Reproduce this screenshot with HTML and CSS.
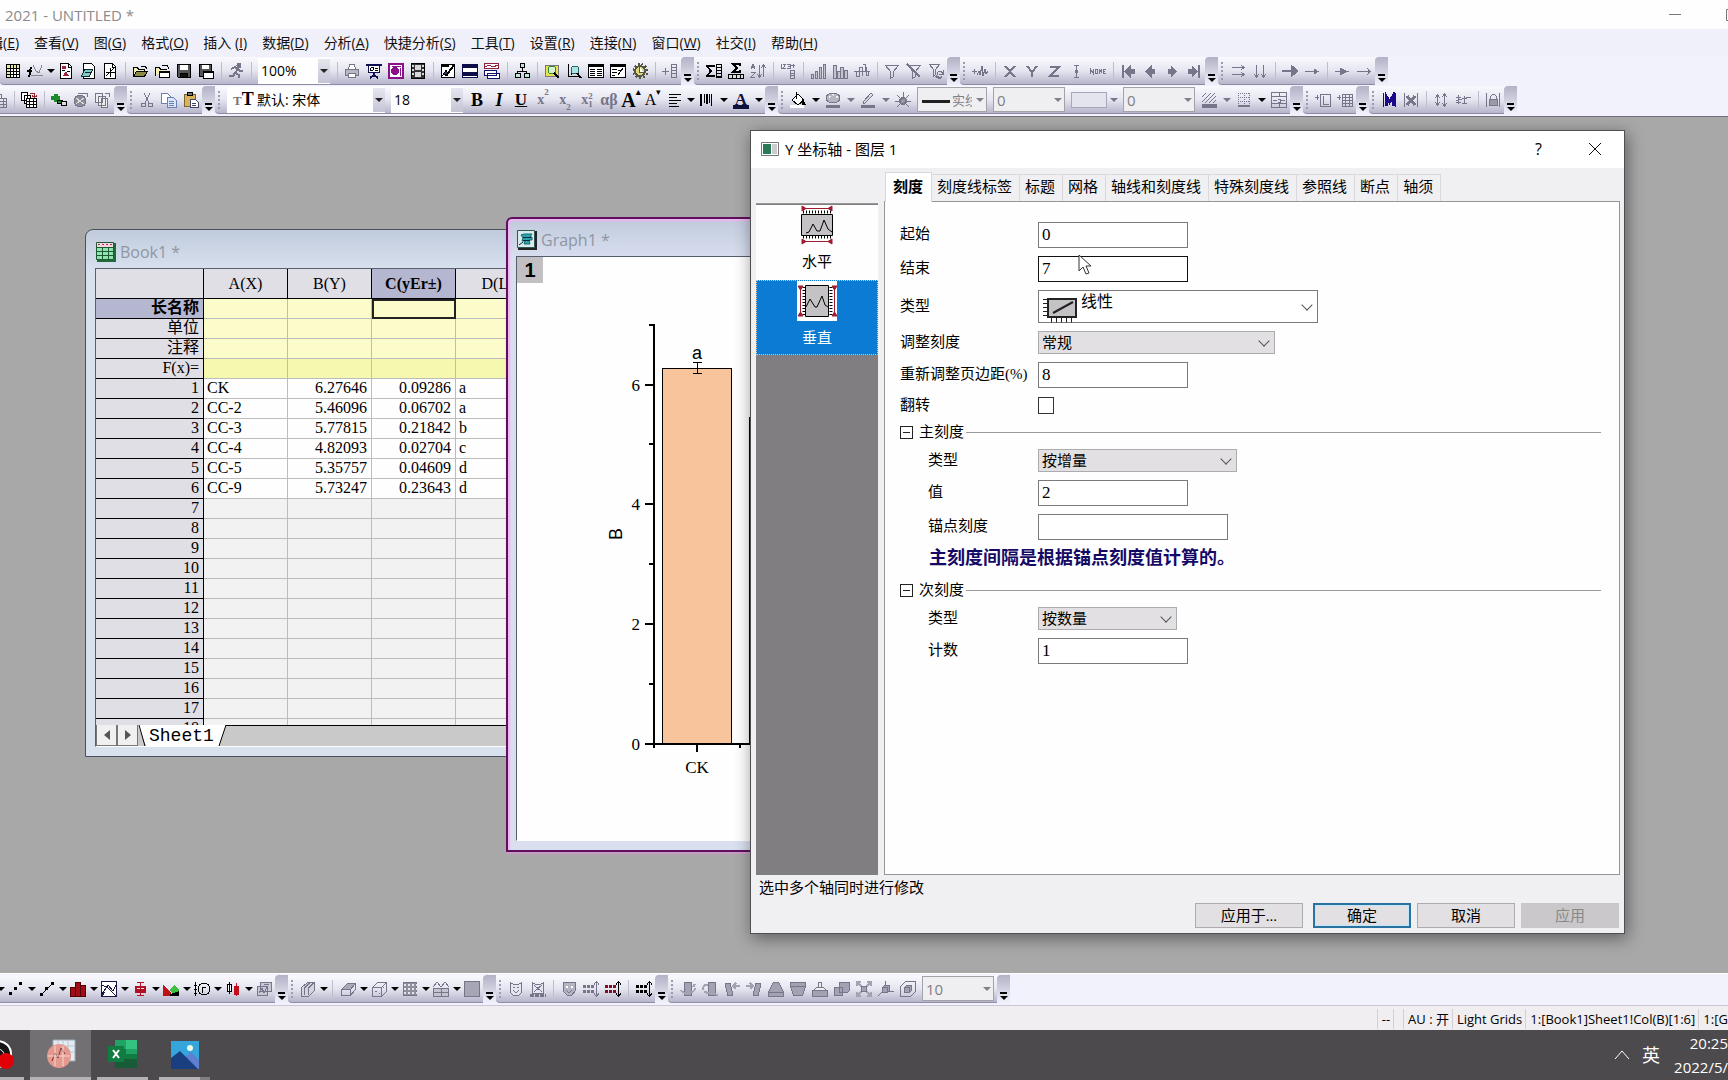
FILE: index.html
```html
<!DOCTYPE html>
<html lang="zh-CN">
<head>
<meta charset="utf-8">
<title>2021 - UNTITLED *</title>
<link rel="stylesheet" href="styles.css">
</head>
<body>
<svg class="sprite" aria-hidden="true">
  <symbol id="sheet" viewBox="0 0 16 16"><rect x="1.500" y="1.500" width="13" height="13" fill="#fff"/><path fill="#e9e6a0" stroke="none" d="M2 2h12v3H2zM2 5h3v9H2z"/><path d="M1 5.500h14M1 8.500h14M1 11.500h14M5.500 2v13M8.500 2v13M11.500 2v13"/></symbol>
  <symbol id="fx" viewBox="0 0 16 16"><path stroke="#888" d="M4 12.500h12M6 2l3 6 3 2 3-8"/><path stroke-width="2" d="M5 5c-3-1-1 9-4 8M0 8h5"/></symbol>
  <symbol id="page-bars" viewBox="0 0 16 16"><path fill="#fff" d="M2.500.500h8l3 3v12h-11z"/><path fill="#a12040" stroke="none" d="M4 3h4v3H4zM5 13l3-5 3 5z"/><path d="M10.500 1v3h3M9 8.500h3M4 7.500h3"/></symbol>
  <symbol id="page-draw" viewBox="0 0 16 16"><path fill="#fff" d="M3.500.500h8l3 3v12h-11z"/><path fill="#7ecdc0" stroke="#123" d="M1.500 13.500l3-7h8l-3 7zM5 9.500h6"/></symbol>
  <symbol id="page-axis" viewBox="0 0 16 16"><path fill="#fff" d="M2.500.500h8l3 3v12h-11z"/><path d="M10.500 1v3h3M4 13l8-8M8.500 5v9M4 9.500h9"/></symbol>
  <symbol id="open" viewBox="0 0 16 16"><path fill="#f4f1b0" d="M1.500 13.500v-9h4l1 2h6v2"/><path fill="#8b8a45" d="M1.500 13.500l3-5h11l-3 5z"/><path d="M9 3.500h4l2 2"/></symbol>
  <symbol id="open-grid" viewBox="0 0 16 16"><path fill="#f4f1b0" d="M1.500 12.500v-8h4l1 2h6"/><path fill="#fff" d="M5.500 8.500h10v6h-10z"/><path stroke-width="2" d="M5 9h11"/><path d="M8 2.500h5l2 3"/></symbol>
  <symbol id="save" viewBox="0 0 16 16"><path fill="#555" d="M1.500 1.500h13v13h-12l-1-1z"/><path fill="#fff" stroke="none" d="M4 2h8v5H4z"/><path fill="#111" d="M4.500 10.500h7v4h-7z"/></symbol>
  <symbol id="save-grid" viewBox="0 0 16 16"><path fill="#555" d="M1.500 1.500h12v12h-12z"/><path fill="#fff" stroke="none" d="M4 2h7v4H4z"/><path fill="#fff" d="M5.500 8.500h10v7h-10z"/><path stroke-width="2" d="M5 9h11"/></symbol>
  <symbol id="runner" viewBox="0 0 16 16"><circle cx="11" cy="2.500" r="2" fill="currentColor"/><path stroke-width="2" d="M3 6l4-2 3 2-3 4 4 2v3M7 10l-2 3H1M10 6l2 2h3"/></symbol>
  <symbol id="print" viewBox="0 0 16 16"><path fill="#b8b8c4" d="M1.500 6.500h13v6h-13z"/><path fill="#fff" d="M4.500 6.500l1-5h5l1 5zM4.500 10.500h7v4h-7z"/></symbol>
  <symbol id="present" viewBox="0 0 16 16"><path stroke="#101050" fill="#fff" d="M2.500 2.500h11v7h-11z"/><path stroke="#101050" stroke-width="2" d="M0 2h16M8 10v3M4 15l4-3 4 3"/><circle cx="6" cy="6" r="1.500"/><path d="M9 5.500h3M9 7.500h3"/></symbol>
  <symbol id="palette-box" viewBox="0 0 16 16"><path fill="#fff" stroke="#8a0f8a" stroke-width="2" d="M1 1h14v14H1z"/><circle cx="7" cy="8" r="3.500" fill="#8a0f8a" stroke="#8a0f8a"/><path stroke="#8a0f8a" d="M4 3.500h9M12.500 5v8"/></symbol>
  <symbol id="film" viewBox="0 0 16 16"><path fill="#333" d="M1.500.500h13v15h-13z"/><path fill="#d8d8d8" stroke="none" d="M5 2h6v5H5zM5 9h6v5H5zM2 2h2v2H2zM2 6h2v2H2zM2 10h2v2H2zM12 2h2v2h-2zM12 6h2v2h-2zM12 10h2v2h-2z"/></symbol>
  <symbol id="notes" viewBox="0 0 16 16"><path fill="#fff" d="M1.500 1.500h13v13h-13z"/><path stroke-width="2" d="M1 3h8M6 13l8-11"/><path fill="#335" d="M3 12l3-5 2 4z"/></symbol>
  <symbol id="bands" viewBox="0 0 16 16"><path fill="#fff" stroke="#0c0c48" d="M.500 1.500h15v13H.500z"/><path stroke="#0c0c48" stroke-width="4" d="M0 3h16M0 11h16"/></symbol>
  <symbol id="stack" viewBox="0 0 16 16"><path fill="#fff" stroke="#902040" d="M.500.500h14v5H.500z"/><path stroke="#902040" d="M1 4l4-2 4 2 5-2"/><path fill="#fff" stroke="#101070" d="M.500 7.500h12v5H.500zM3.500 10.500h12v5h-12z"/></symbol>
  <symbol id="tree" viewBox="0 0 16 16"><path d="M8 5v4M3.500 11v-2.500h9V11"/><path fill="#bfe8d8" d="M6 .500h4v4H6zM1 10.500h5v4H1zM10 10.500h5v4h-5z"/></symbol>
  <symbol id="find-graph" viewBox="0 0 16 16"><path fill="#e9e24c" stroke="#777" d="M1.500 2.500h13v11h-13z"/><circle cx="8" cy="7" r="4" fill="#d7f0d0" stroke="#383"/><path stroke-width="2" d="M10 10l5 5"/></symbol>
  <symbol id="find-axis" viewBox="0 0 16 16"><path d="M2.500 1v12H15M5 12V4l3 4"/><circle cx="9" cy="7" r="4" fill="#a8e4e4" stroke="#266"/><path stroke-width="2" d="M11 10l4 5"/></symbol>
  <symbol id="list" viewBox="0 0 16 16"><path fill="#fff" d="M.500 1.500h15v13H.500z"/><path stroke-width="3" d="M0 2.500h16"/><path d="M2 6.500h5M9 6.500h5M2 8.500h5M9 8.500h5M2 10.500h5M9 10.500h5M2 12.500h5M9 12.500h5"/></symbol>
  <symbol id="list-edit" viewBox="0 0 16 16"><path fill="#fff" d="M.500 1.500h15v13H.500z"/><path stroke-width="3" d="M0 2.500h16"/><path d="M2 6.500h5M2 9.500h5M2 12.500h3M8 12l5-7M8 7.500h3"/></symbol>
  <symbol id="gear" viewBox="0 0 16 16"><circle cx="8" cy="8" r="5" fill="#dcd878" stroke="#554" stroke-width="2"/><path stroke="#554" stroke-width="2" stroke-dasharray="2 2" d="M8 1a7 7 0 1 0 1 0"/><path fill="#fff" stroke="#554" d="M7.500 3v6h4"/></symbol>
  <symbol id="add-col" viewBox="0 0 16 16"><path d="M0 8.500h7M3.500 5v7M9.500 1.500h5v13h-5zM9 4.500h6M9 7.500h6M9 10.500h6"/></symbol>
  <symbol id="sum-col" viewBox="0 0 16 16"><path stroke-width="2" d="M8 4V3H1l4 5-4 5h7v-1"/><path d="M10.500 1.500h5v13h-5zM10 4.500h6M10 7.500h6M10 10.500h6M10 13.500h6"/></symbol>
  <symbol id="sum-row" viewBox="0 0 16 16"><path stroke-width="2" d="M12 3V1H5l4 4-4 4h7V7"/><path fill="#ddd" d="M.500 11.500h15v4H.500zM4.500 11v4M8.500 11v4M12.500 11v4"/></symbol>
  <symbol id="sort" viewBox="0 0 16 16"><path d="M1 6l2-5 2 5M2 4.500h3M1 9.500h4l-4 5h4M9.500 2v12M7 11l2.500 3L12 11M13.500 14V2M11 5l2.500-3L16 5"/></symbol>
  <symbol id="num-col" viewBox="0 0 16 16"><path d="M1.500 1v5M3 1.500h2.500L3 5.500h3M7 1.500h3v4H7M8 3.500h2M11 2.500h4M13 1v4M10.500 7.500h4v8h-4zM10 10.500h5M10 12.500h5"/></symbol>
  <symbol id="bars-up" viewBox="0 0 16 16"><path fill="#c4c4d0" d="M1.500 11.500h2v4h-2zM5.500 8.500h2v7h-2zM9.500 4.500h2v11h-2zM13.500 1.500h2v14h-2z"/></symbol>
  <symbol id="bars-mix" viewBox="0 0 16 16"><path fill="#c4c4d0" d="M1.500 2.500h3v13h-3zM5.500 8.500h3v7h-3zM8.500 4.500h3v11h-3zM12.500 7.500h3v8h-3z"/></symbol>
  <symbol id="bars-mid" viewBox="0 0 16 16"><path d="M0 8.500h16M2.500 8v5h3V4h3v9M8.500 1.500h3v7M12.500 4v8h2V8"/></symbol>
  <symbol id="funnel" viewBox="0 0 16 16"><path d="M1.500 2.500h13l-5 6v5l-3 2v-7zM2 3l5 6"/></symbol>
  <symbol id="funnel-off" viewBox="0 0 16 16"><path d="M2.500 2.500h12l-5 6v5l-3 2v-7z"/><path stroke-width="2" d="M1 1l13 13"/></symbol>
  <symbol id="funnel-re" viewBox="0 0 16 16"><path d="M1.500 1.500h10l-4 5v5l-2 2v-7zM9 12c0-5 5-4 6-1M15 7v4h-4"/><path stroke-width="2" d="M14 14c-3 2-5 0-6-1"/></symbol>
  <symbol id="plus-wave" viewBox="0 0 16 16"><path d="M0 8.500h5M2.500 6v5M5 12l2-4 1 4 2-9 1 10 2-7 1 5 2-3"/></symbol>
  <symbol id="lx" viewBox="0 0 16 16"><path stroke-width="2" d="M3 3l10 11M13 3L3 14"/></symbol>
  <symbol id="ly" viewBox="0 0 16 16"><path stroke-width="2" d="M3 3l5 6 5-6M8 8v6"/></symbol>
  <symbol id="lz" viewBox="0 0 16 16"><path stroke-width="2" d="M4 4h9L4 13h9"/></symbol>
  <symbol id="errbar" viewBox="0 0 16 16"><path d="M8.500 3v11M6 2.500h5M6 14.500h5"/><path fill="currentColor" d="M7.500 7.500h2v2h-2z"/></symbol>
  <symbol id="none" viewBox="0 0 16 16"><path d="M.500 11V6l2.500 4V6M5.500 6.500h2v4h-2zM9.500 11V6l2 4V6M15.500 6.500h-2v4h2M13 8.500h2"/></symbol>
  <symbol id="first" viewBox="0 0 16 16"><path stroke-width="2" d="M3 2v13"/><path fill="currentColor" d="M5 8.500l5-5v3h4v4h-4v3z"/></symbol>
  <symbol id="prev" viewBox="0 0 16 16"><path fill="currentColor" d="M4 8.500l5-5v3h3v4H9v3z"/></symbol>
  <symbol id="next" viewBox="0 0 16 16"><path fill="currentColor" d="M12 8.500l-5-5v3H4v4h3v3z"/></symbol>
  <symbol id="last" viewBox="0 0 16 16"><path stroke-width="2" d="M13 2v13"/><path fill="currentColor" d="M11 8.500l-5-5v3H2v4h4v3z"/></symbol>
  <symbol id="rights" viewBox="0 0 16 16"><path d="M2 4.500h12M2 11.500h12M11 2l3 2.500L11 7M11 9l3 2.500-3 2.500"/></symbol>
  <symbol id="downs" viewBox="0 0 16 16"><path d="M4.500 2v12M11.500 2v12M2 11l2.500 3L7 11M9 11l2.500 3 2.500-3"/></symbol>
  <symbol id="arrow-big" viewBox="0 0 16 16"><path stroke-width="2" d="M0 8h10"/><path fill="currentColor" d="M9 2l7 6-7 6z"/></symbol>
  <symbol id="arrow" viewBox="0 0 16 16"><path d="M1 8.500h10"/><path fill="currentColor" d="M10 6l4 2.500-4 2.500z"/></symbol>
  <symbol id="arrow-mid" viewBox="0 0 16 16"><path d="M1 8.500h14"/><path fill="currentColor" d="M6 5l7 3.500L6 12z"/></symbol>
  <symbol id="arrow-thin" viewBox="0 0 16 16"><path d="M1 8.500h13M11 5l3 3.500-3 3.500"/></symbol>

  <symbol id="grid-in" viewBox="0 0 16 16"><path d="M4.500 6.500h11v9h-11zM4 9.500h11M4 12.500h11M8.500 7v8M12.500 7v8M2 2.500h8v3"/></symbol>
  <symbol id="pages-grid" viewBox="0 0 16 16"><path fill="#fff" d="M.500.500h6v8h-6zM3.500 3.500h6v8h-6z"/><path fill="#fff" d="M5.500 6.500h10v9h-10z"/><path d="M5 9.500h10M5 12.500h10M8.500 7v8M12.500 7v8"/><path stroke="#a02030" d="M9 1.500h4.500V5M11 3.500l2.500 2L16 3.500"/></symbol>
  <symbol id="add-green" viewBox="0 0 16 16"><path stroke="#1b8a2b" stroke-width="4" d="M0 6h9M5 2v8"/><path fill="#1b8a2b" d="M6.500 8.500h5v3h-5z"/><path fill="#ddd" d="M10.500 9.500h5v4h-5z"/></symbol>
  <symbol id="globe" viewBox="0 0 16 16"><circle cx="7" cy="9" r="6" fill="#8c8c98"/><path stroke="#ddd" d="M3 6l8 6M11 6l-8 6"/><path d="M5 1.500h9.500V5"/></symbol>
  <symbol id="copies" viewBox="0 0 16 16"><path fill="#eee" d="M.500 1.500h7v9h-7zM3.500 4.500h7v9h-7zM6.500 6.500h6v9h-6z"/><path d="M10 1.500h4.500V5"/></symbol>
  <symbol id="cut" viewBox="0 0 16 16"><path d="M5 1l5 10M11 1L6 11"/><circle cx="4.500" cy="13" r="2"/><circle cx="11.500" cy="13" r="2"/></symbol>
  <symbol id="copy" viewBox="0 0 16 16"><g stroke="#6a80b0"><path fill="#fff" d="M.500 1.500h6l3 3v7h-9z"/><path fill="#dce6fa" d="M6.500 5.500h6l3 3v7h-9zM8 9.500h5M8 11.500h5M8 13.500h5"/></g></symbol>
  <symbol id="paste" viewBox="0 0 16 16"><path fill="#d8b35a" stroke="#7a6530" d="M1.500 2.500h11v12h-11z"/><path fill="#777" d="M4.500.500h5v3h-5z"/><path fill="#fff" stroke="#446" d="M7.500 7.500h5l3 3v5h-8zM9 11.500h4M9 13.500h4"/></symbol>
  <symbol id="left-lines" viewBox="0 0 16 16"><path d="M2 2.500h12M2 5.500h8M2 8.500h12M2 11.500h8M2 14.500h10"/></symbol>
  <symbol id="vert-lines" viewBox="0 0 16 16"><path stroke-width="2" d="M3 2v12M9 2v10"/><path d="M6.500 2v9M11.500 2v9M13.500 2v12"/></symbol>
  <symbol id="bucket" viewBox="0 0 16 16"><path fill="#fff" d="M2 8l6-6 6 6-6 5z"/><path d="M6.500 0v7"/><path fill="#000" d="M12 7l3 5h-3z"/><path stroke="#fff" stroke-width="3" d="M0 14.500h14"/></symbol>
  <symbol id="palette" viewBox="0 0 16 16"><ellipse cx="8" cy="6" rx="7" ry="5" fill="#b6b6c2"/><path stroke="#eee" stroke-width="2" stroke-dasharray="2 2" d="M4 5l4-2 4 2-1 3"/><path stroke-width="3" d="M1 14.500h14"/></symbol>
  <symbol id="pen" viewBox="0 0 16 16"><path fill="#ddd" d="M3 10l8-9 2 2-8 8H3z"/><path stroke-width="3" d="M1 14.500h14"/></symbol>
  <symbol id="lamp" viewBox="0 0 16 16"><circle cx="8" cy="9" r="3" fill="#999" stroke-width="2"/><path d="M8 0v5M2 3l3 3M14 3l-3 3M0 9h4M12 9h4M2 15l3-3M14 15l-3-3"/></symbol>
  <symbol id="hatch" viewBox="0 0 16 16"><path d="M1 5l4-4M1 10l9-9M4 11L14 1M8 11l7-7M12 11l3-3"/><path stroke-width="4" d="M1 14h15"/></symbol>
  <symbol id="border" viewBox="0 0 16 16"><path stroke-dasharray="1 1" d="M2 1.500h12M2 5.500h12M2 9.500h12M2.500 1v11M8.500 1v11M13.500 1v11"/><path stroke-width="2" d="M2 14h12"/></symbol>
  <symbol id="merge" viewBox="0 0 16 16"><path d="M.500.500h15v15H.500zM0 4.500h16M0 11.500h16M8.500 1v3M8.500 12v3M2 8.500h4M10 8.500h4M7 7h2v3H7"/></symbol>
  <symbol id="add-layer" viewBox="0 0 16 16"><path d="M0 5.500h4M2.500 3v5M5.500 2.500h10v12h-10zM8.500 4v8H14"/></symbol>
  <symbol id="add-grid" viewBox="0 0 16 16"><path d="M0 5.500h4M2.500 3v5M5.500 2.500h10v12h-10zM5 5.500h10M5 8.500h10M5 11.500h10M8.500 3v11M12.500 3v11"/></symbol>
  <symbol id="mask" viewBox="0 0 16 16"><g stroke="#1a0a8a"><path d="M2.500 1v14M14.500 1v14"/><path stroke-width="3" d="M5 14V4l3.500 6L12 4v10"/></g></symbol>
  <symbol id="unmask" viewBox="0 0 16 16"><path d="M1.500 1v14M14.500 1v14"/><path stroke-width="3" d="M4 4l8 9M12 4l-8 9"/></symbol>
  <symbol id="swap" viewBox="0 0 16 16"><path d="M4.500 3v10M2 6l2.500-3L7 6M2 10l2.500 3L7 10M11.500 2v12M9 5l2.500-3L14 5M9 11l2.500 3 2.500-3"/></symbol>
  <symbol id="swap-line" viewBox="0 0 16 16"><path d="M3.500 3v9M1 5h5M1 10h5M9.500 4v8M7 6h5M7 11h5M1 9l6-2 9-2"/></symbol>
  <symbol id="lock" viewBox="0 0 16 16"><path d="M1.500 1v14M14.500 1v14M5.500 7V4.500l2-2h2l2 2V7"/><path fill="#999aa6" d="M4.500 7.500h8v6h-8z"/></symbol>

  <symbol id="dots" viewBox="0 0 16 16"><path fill="currentColor" stroke="none" d="M1 11h3v3H1zM6 6h3v3H6zM11 1h3v3h-3z"/></symbol>
  <symbol id="line-dots" viewBox="0 0 16 16"><path d="M3 13L13 3"/><path fill="currentColor" stroke="none" d="M1 12h3v3H1zM6 6h3v3H6zM12 1h3v3h-3z"/></symbol>
  <symbol id="red-bars" viewBox="0 0 16 16"><path fill="#a10c18" stroke="#500" d="M.500 6.500h5v9h-5zM5.500 1.500h5v14h-5zM10.500 4.500h5v11h-5z"/></symbol>
  <symbol id="wave-box" viewBox="0 0 16 16"><path fill="#fff" stroke="#181848" d="M.500.500h15v15H.500z"/><path stroke="#181848" d="M1 13l6-9 5 6 3-6M1 4l6 3 8 8M1 15l3-4"/></symbol>
  <symbol id="box" viewBox="0 0 16 16"><path stroke="#b01020" d="M8.500 1v14M5 1.500h7M5 14.500h7"/><path stroke="#b01020" stroke-width="2" d="M4 6h9v5H4zM4 8.500h9"/></symbol>
  <symbol id="areas" viewBox="0 0 16 16"><path fill="#c01018" stroke="none" d="M0 4l8 7v4H0z"/><path fill="#3fbf3f" stroke="none" d="M6 9l5-5 5 5v3H9z"/><path fill="#000" stroke="none" d="M7 13l9-3v5H7z"/></symbol>
  <symbol id="polar" viewBox="0 0 16 16"><path d="M1.500 1v14M0 4.500h3M0 8.500h3M0 12.500h3"/><circle cx="10" cy="8" r="6"/><path d="M8.500 12V6M9 6h3"/></symbol>
  <symbol id="candles" viewBox="0 0 16 16"><path d="M4.500 1v12M2.500 3.500h4v7h-4z" fill="#fff"/><path stroke="#c01020" fill="#c01020" d="M11.500 2v13M9.500 5.500h4v8h-4z"/></symbol>
  <symbol id="cards" viewBox="0 0 16 16"><path fill="#c8c8d4" d="M4.500 1.500h11v9h-11zM1.500 5.500h10v9h-10z"/><path d="M3 12l3-5 2 5 3-6M8 3.500h5"/></symbol>
  <symbol id="bars3d" viewBox="0 0 16 16"><path fill="#d4d4de" d="M1.500 6.500l6-5h7v8l-6 6h-7zM4.500 14V7l5-5M8.500 14V7l5-5"/></symbol>
  <symbol id="slab" viewBox="0 0 16 16"><path fill="#a9a9b8" d="M1.500 8.500l6-6h8l-5 6z"/><path d="M1.500 8.500v6h9v-6M10.500 14.500l5-6v-6"/></symbol>
  <symbol id="cube-dots" viewBox="0 0 16 16"><path d="M1.500 6.500l5-5h9v9l-5 5h-9zM1.500 6.500h9v9M10.500 6.500l5-5M4 10.500h2M8 12.500h1M12 6.500h1"/></symbol>
  <symbol id="dotgrid" viewBox="0 0 16 16"><path fill="#8e8e9c" d="M1.500 1.500h13v13h-13z"/><path stroke="#e6e6ee" stroke-width="2" stroke-dasharray="2 2" d="M2 4h13M2 8h13M2 12h13"/></symbol>
  <symbol id="wave-row" viewBox="0 0 16 16"><path d="M0 6l4-5 4 5 4-5 4 5"/><path fill="#c4c4d0" d="M.500 7.500h15v8H.500zM0 11.500h16M8.500 8v8"/></symbol>
  <symbol id="square" viewBox="0 0 16 16"><path fill="#a6a6b4" d="M.500.500h15v15H.500z"/></symbol>
  <symbol id="face" viewBox="0 0 16 16"><path fill="#e6e6ee" d="M2.500 1.500l3 2h5l3-2v10l-3 3h-5l-3-3z"/><path d="M5 6.500h2M9 6.500h2M5 9l3 3 3-3"/></symbol>
  <symbol id="face-x" viewBox="0 0 16 16"><path fill="#e6e6ee" d="M2.500 1.500l3 2h5l3-2v11h-11z"/><path d="M4 4l8 7M12 4l-8 7"/><path stroke-width="3" stroke-dasharray="4 1" d="M0 14h16"/></symbol>
  <symbol id="mask-face" viewBox="0 0 16 16"><path fill="#b4b4c2" d="M2.500 1.500h12v8l-4 5h-4l-4-4z"/><path stroke="#fff" stroke-width="2" d="M5 5.500h2M10 5.500h2"/><path d="M5 9l3 3 3-3"/></symbol>
  <symbol id="pick" viewBox="0 0 16 16"><path stroke-width="3" stroke-dasharray="3 1" d="M0 5.500h11M0 10.500h11"/><path d="M13.500 1v14M11 3.500l2.500-3 2.500 3M11 12.500l2.500 3 2.500-3"/></symbol>
  <symbol id="pick-red" viewBox="0 0 16 16"><path stroke="#801020" stroke-width="3" stroke-dasharray="3 1" d="M0 5.500h11M0 10.500h11"/><path d="M13.500 1v14M11 3.500l2.500-3 2.500 3M11 12.500l2.500 3 2.500-3"/></symbol>
  <symbol id="rot-l" viewBox="0 0 16 16"><path fill="#a2a2b2" d="M4.500 1.500h7v13h-7z"/><path stroke="#a2a2b2" stroke-width="2" d="M1 9c0 4 14 4 14-2M13 6l2-3"/></symbol>
  <symbol id="rot-r" viewBox="0 0 16 16"><path fill="#a2a2b2" d="M6.500 1.500h7v13h-7z"/><path stroke="#a2a2b2" stroke-width="2" d="M1 9c0-5 3-6 5-5M2 11l10 2 4 1"/></symbol>
  <symbol id="tilt-l" viewBox="0 0 16 16"><path fill="#a2a2b2" d="M1 3l5-1 3 12-5 1z"/><path stroke="#a2a2b2" stroke-width="2" d="M9 5h7M12 2L9 5l3 3"/></symbol>
  <symbol id="tilt-r" viewBox="0 0 16 16"><path fill="#a2a2b2" d="M10 2l5 1-3 12-5-1z"/><path stroke="#a2a2b2" stroke-width="2" d="M0 5h7M4 2l3 3-3 3"/></symbol>
  <symbol id="trap-up" viewBox="0 0 16 16"><path fill="#a2a2b2" d="M.500 15.500v-4l3-7 2-3h5l2 3 3 7v4zM1 11.500h14"/></symbol>
  <symbol id="trap-dn" viewBox="0 0 16 16"><path fill="#a2a2b2" d="M.500 1.500h15v4l-3 9h-9l-3-9zM1 5.500h14"/></symbol>
  <symbol id="tray" viewBox="0 0 16 16"><path fill="#a2a2b2" d="M.500 9.500h15v6H.500z"/><path fill="#eee" d="M2 9l3-3h6l3 3M6.500 6V1.500h3V6"/></symbol>
  <symbol id="cubes" viewBox="0 0 16 16"><path fill="#a2a2b2" d="M5.500 1.500h10v8l-2 2h-8zM.500 6.500h8v8h-8z"/></symbol>
  <symbol id="expand" viewBox="0 0 16 16"><path stroke="#a2a2b2" stroke-width="2" d="M1 5V1h4M11 1h4v4M15 11v4h-4M5 15H1v-4M2 2l12 12M14 2L2 14"/><path fill="#a2a2b2" d="M5.500 5.500h5v5h-5z"/></symbol>
  <symbol id="axis-cube" viewBox="0 0 16 16"><path fill="#a2a2b2" d="M4.500 6.500l2-2h5v5l-2 2h-5z"/><path d="M7.500 0v4M11 10h5M4 11l-4 4M4.500 6.500h5v5"/></symbol>
  <symbol id="box-cube" viewBox="0 0 16 16"><path fill="#a2a2b2" d="M4.500 6.500l2-2h5v5l-2 2h-5z"/><path d="M.500 5.500l5-5h10v10l-5 5H.500zM4.500 6.500h5v5"/></symbol>
</svg>

<header class="titlebar">
  <h1 class="title">2021 - UNTITLED *</h1>
  <div class="window-buttons">
    <button class="winbtn" aria-label="最小化"><svg width="12" height="12"><path d="M0 5.500h12" stroke="#777"/></svg></button>
    <button class="winbtn" aria-label="最大化"><svg width="12" height="12"><path d="M.500.500h11v11H.500z" fill="none" stroke="#777"/></svg></button>
  </div>
</header>

<nav class="menubar">
  <a href="#">编辑(<u>E</u>)</a><a href="#">查看(<u>V</u>)</a><a href="#">图(<u>G</u>)</a><a href="#">格式(<u>O</u>)</a><a href="#">插入 (<u>I</u>)</a><a href="#">数据(<u>D</u>)</a><a href="#">分析(<u>A</u>)</a><a href="#">快捷分析(<u>S</u>)</a><a href="#">工具(<u>T</u>)</a><a href="#">设置(<u>R</u>)</a><a href="#">连接(<u>N</u>)</a><a href="#">窗口(<u>W</u>)</a><a href="#">社交(<u>I</u>)</a><a href="#">帮助(<u>H</u>)</a>
</nav>

<div class="dock dock-top">
  <div class="dock-row">
    <div class="toolbar first" role="toolbar" aria-label="标准">
      <button class="tb" aria-label="新建工作簿"><svg><use href="#sheet"/></svg></button>
      <button class="tb" aria-label="新建函数图"><svg><use href="#fx"/></svg></button><button class="drop" aria-label="更多"></button>
      <button class="tb" aria-label="新建图"><svg><use href="#page-bars"/></svg></button>
      <button class="tb" aria-label="新建布局"><svg><use href="#page-draw"/></svg></button>
      <button class="tb" aria-label="新建矩阵"><svg><use href="#page-axis"/></svg></button>
      <span class="sep"></span>
      <button class="tb" aria-label="打开"><svg><use href="#open"/></svg></button>
      <button class="tb" aria-label="打开模板"><svg><use href="#open-grid"/></svg></button>
      <button class="tb" aria-label="保存"><svg><use href="#save"/></svg></button>
      <button class="tb" aria-label="保存模板"><svg><use href="#save-grid"/></svg></button>
      <span class="sep"></span>
      <button class="tb off" aria-label="运行"><svg><use href="#runner"/></svg></button>
      <span class="sep"></span>
      <span class="combo"><select aria-label="缩放"><option>100%</option></select></span>
      <span class="sep"></span>
      <button class="tb off" aria-label="打印"><svg><use href="#print"/></svg></button>
      <button class="tb" aria-label="幻灯片"><svg><use href="#present"/></svg></button>
      <button class="tb" aria-label="发送图"><svg><use href="#palette-box"/></svg></button>
      <button class="tb" aria-label="视频"><svg><use href="#film"/></svg></button>
      <span class="sep"></span>
      <button class="tb" aria-label="代码编辑器"><svg><use href="#notes"/></svg></button>
      <button class="tb" aria-label="结果记录"><svg><use href="#bands"/></svg></button>
      <button class="tb" aria-label="消息日志"><svg><use href="#stack"/></svg></button>
      <span class="sep"></span>
      <button class="tb" aria-label="项目管理器"><svg><use href="#tree"/></svg></button>
      <span class="sep"></span>
      <button class="tb" aria-label="查找"><svg><use href="#find-graph"/></svg></button>
      <button class="tb" aria-label="查找坐标"><svg><use href="#find-axis"/></svg></button>
      <button class="tb" aria-label="列表"><svg><use href="#list"/></svg></button>
      <button class="tb" aria-label="编辑列表"><svg><use href="#list-edit"/></svg></button>
      <button class="tb" aria-label="选项"><svg><use href="#gear"/></svg></button>
      <span class="sep"></span>
      <button class="tb off" aria-label="添加列"><svg><use href="#add-col"/></svg></button>
      <button class="cap" aria-label="工具栏选项"></button>
    </div>
    <div class="toolbar" role="toolbar" aria-label="列">
      <span class="grip"></span>
      <button class="tb" aria-label="列统计"><svg><use href="#sum-col"/></svg></button>
      <button class="tb" aria-label="行统计"><svg><use href="#sum-row"/></svg></button>
      <button class="tb off" aria-label="排序"><svg><use href="#sort"/></svg></button>
      <span class="sep"></span>
      <button class="tb off" aria-label="行号"><svg><use href="#num-col"/></svg></button>
      <span class="sep"></span>
      <button class="tb off" aria-label="升序柱"><svg><use href="#bars-up"/></svg></button>
      <button class="tb off" aria-label="柱"><svg><use href="#bars-mix"/></svg></button>
      <button class="tb off" aria-label="随机柱"><svg><use href="#bars-mid"/></svg></button>
      <span class="sep"></span>
      <button class="tb off" aria-label="筛选"><svg><use href="#funnel"/></svg></button>
      <button class="tb off" aria-label="停用筛选"><svg><use href="#funnel-off"/></svg></button>
      <button class="tb off" aria-label="重新筛选"><svg><use href="#funnel-re"/></svg></button>
      <button class="cap" aria-label="工具栏选项"></button>
    </div>
    <div class="toolbar" role="toolbar" aria-label="绘图设定">
      <span class="grip"></span>
      <button class="tb off" aria-label="添加曲线"><svg><use href="#plus-wave"/></svg></button>
      <span class="sep"></span>
      <button class="tb off" aria-label="设为 X"><svg><use href="#lx"/></svg></button>
      <button class="tb off" aria-label="设为 Y"><svg><use href="#ly"/></svg></button>
      <button class="tb off" aria-label="设为 Z"><svg><use href="#lz"/></svg></button>
      <button class="tb off" aria-label="设为误差"><svg><use href="#errbar"/></svg></button>
      <button class="tb off" aria-label="忽略"><svg><use href="#none"/></svg></button>
      <span class="sep"></span>
      <button class="tb off" aria-label="移到最前"><svg><use href="#first"/></svg></button>
      <button class="tb off" aria-label="左移"><svg><use href="#prev"/></svg></button>
      <button class="tb off" aria-label="右移"><svg><use href="#next"/></svg></button>
      <button class="tb off" aria-label="移到最后"><svg><use href="#last"/></svg></button>
      <button class="cap" aria-label="工具栏选项"></button>
    </div>
    <div class="toolbar" role="toolbar" aria-label="箭头">
      <span class="grip"></span>
      <button class="tb off" aria-label="水平对齐"><svg><use href="#rights"/></svg></button>
      <button class="tb off" aria-label="垂直对齐"><svg><use href="#downs"/></svg></button>
      <span class="sep"></span>
      <button class="tb off" aria-label="加宽箭头"><svg><use href="#arrow-big"/></svg></button>
      <button class="tb off" aria-label="缩窄箭头"><svg><use href="#arrow"/></svg></button>
      <span class="sep"></span>
      <button class="tb off" aria-label="加长箭头"><svg><use href="#arrow-mid"/></svg></button>
      <button class="tb off" aria-label="缩短箭头"><svg><use href="#arrow-thin"/></svg></button>
      <button class="cap" aria-label="工具栏选项"></button>
    </div>
  </div>
  <div class="dock-row">
    <div class="toolbar clipped" role="toolbar" aria-label="导入">
      <button class="tb off" aria-label="导入向导"><svg><use href="#grid-in"/></svg></button>
      <span class="sep"></span>
      <button class="tb" aria-label="导入多个"><svg><use href="#pages-grid"/></svg></button>
      <span class="sep"></span>
      <button class="tb" aria-label="连接文件"><svg><use href="#add-green"/></svg></button>
      <button class="tb off" aria-label="连接网页"><svg><use href="#globe"/></svg></button>
      <button class="tb off" aria-label="复制导入"><svg><use href="#copies"/></svg></button>
      <button class="cap" aria-label="工具栏选项"></button>
    </div>
    <div class="toolbar" role="toolbar" aria-label="编辑">
      <span class="grip"></span>
      <button class="tb off" aria-label="剪切"><svg><use href="#cut"/></svg></button>
      <button class="tb" aria-label="复制"><svg><use href="#copy"/></svg></button>
      <button class="tb" aria-label="粘贴"><svg><use href="#paste"/></svg></button>
      <button class="cap" aria-label="工具栏选项"></button>
    </div>
    <div class="toolbar" role="toolbar" aria-label="格式">
      <span class="grip"></span>
      <span class="combo font"><b class="tt" aria-hidden="true"><i>T</i>T</b><select aria-label="字体"><option>默认: 宋体</option></select></span>
      <span class="combo"><select aria-label="字号"><option>18</option></select></span>
      <button class="tb glyph bold">B</button>
      <button class="tb glyph italic">I</button>
      <button class="tb glyph under">U</button>
      <button class="tb glyph off">x<sup>2</sup></button>
      <button class="tb glyph off">x<sub>2</sub></button>
      <button class="tb glyph off">x<span class="both"><span>2</span><span>1</span></span></button>
      <button class="tb glyph off greek">αβ</button>
      <button class="tb glyph big">A<sup>▴</sup></button>
      <button class="tb glyph">A<sup>▾</sup></button>
      <button class="tb" aria-label="对齐"><svg><use href="#left-lines"/></svg></button><button class="drop" aria-label="更多"></button>
      <button class="tb" aria-label="方向"><svg><use href="#vert-lines"/></svg></button><button class="drop wide" aria-label="更多"></button>
      <button class="tb glyph fontcolor">A</button><button class="drop wide" aria-label="更多"></button>
      <button class="cap" aria-label="工具栏选项"></button>
    </div>
    <div class="toolbar" role="toolbar" aria-label="样式">
      <span class="grip"></span>
      <button class="tb" aria-label="填充颜色"><svg><use href="#bucket"/></svg></button><button class="drop wide" aria-label="更多"></button>
      <button class="tb off" aria-label="调色板"><svg><use href="#palette"/></svg></button><button class="drop wide off" aria-label="更多"></button>
      <button class="tb off" aria-label="线条颜色"><svg><use href="#pen"/></svg></button><button class="drop wide off" aria-label="更多"></button>
      <button class="tb off" aria-label="光照"><svg><use href="#lamp"/></svg></button>
      <span class="combo flat line"><select aria-label="线型" disabled><option>实线</option></select></span>
      <span class="combo flat"><select aria-label="线宽" disabled><option>0</option></select></span>
      <button class="swatch" aria-label="图案颜色"></button><button class="drop wide off" aria-label="更多"></button>
      <span class="combo flat"><select aria-label="图案宽度" disabled><option>0</option></select></span>
      <button class="tb off" aria-label="填充图案"><svg><use href="#hatch"/></svg></button><button class="drop wide off" aria-label="更多"></button>
      <button class="tb off" aria-label="边框"><svg><use href="#border"/></svg></button><button class="drop wide" aria-label="更多"></button>
      <button class="tb off" aria-label="合并单元格"><svg><use href="#merge"/></svg></button>
      <button class="cap" aria-label="工具栏选项"></button>
    </div>
    <div class="toolbar" role="toolbar" aria-label="图层">
      <span class="grip"></span>
      <button class="tb off" aria-label="添加图层"><svg><use href="#add-layer"/></svg></button>
      <button class="tb off" aria-label="添加网格"><svg><use href="#add-grid"/></svg></button>
      <button class="cap" aria-label="工具栏选项"></button>
    </div>
    <div class="toolbar" role="toolbar" aria-label="屏蔽">
      <span class="grip"></span>
      <button class="tb" aria-label="屏蔽"><svg><use href="#mask"/></svg></button>
      <button class="tb off" aria-label="取消屏蔽"><svg><use href="#unmask"/></svg></button>
      <span class="sep"></span>
      <button class="tb off" aria-label="交换屏蔽"><svg><use href="#swap"/></svg></button>
      <button class="tb off" aria-label="更改屏蔽"><svg><use href="#swap-line"/></svg></button>
      <span class="sep"></span>
      <button class="tb off" aria-label="锁定"><svg><use href="#lock"/></svg></button>
      <button class="cap" aria-label="工具栏选项"></button>
    </div>
  </div>
</div>

<main class="workspace">
  <section class="child book">
    <header class="child-title">
      <svg width="20" height="20" viewBox="0 0 20 20"><path fill="#1f6b3a" d="M1 1h19v19H1z"/><path fill="#8fe3ae" d="M0 0h18v18H0z"/><path fill="#f4d4e0" d="M0 0h18v5H0z"/><path fill="none" stroke="#1d5a34" d="M.500.500h17v17H.500zM0 5.500h18M0 9.500h18M0 13.500h18M6.500 5v13M12.500 5v13"/><path stroke="#b0305a" stroke-dasharray="2 2" d="M2 2.500h15"/></svg>
      <h2>Book1 *</h2>
    </header>
    <div class="grid">
      <table>
        <colgroup><col class="c-head"><col class="c-data"><col class="c-data"><col class="c-data"><col class="c-data"></colgroup>
        <thead><tr><th></th><th scope="col">A(X)</th><th scope="col">B(Y)</th><th scope="col" class="current">C(yEr±)</th><th scope="col">D(L)</th></tr></thead>
        <tbody>
          <tr class="meta"><th scope="row" class="current">长名称</th><td></td><td></td><td class="cell-current"></td><td></td></tr>
          <tr class="meta"><th scope="row">单位</th><td></td><td></td><td></td><td></td></tr>
          <tr class="meta"><th scope="row">注释</th><td></td><td></td><td></td><td></td></tr>
          <tr class="meta fx"><th scope="row">F(x)=</th><td></td><td></td><td></td><td></td></tr>
          <tr class="data"><th scope="row">1</th><td>CK</td><td class="num">6.27646</td><td class="num">0.09286</td><td>a</td></tr>
          <tr class="data"><th scope="row">2</th><td>CC-2</td><td class="num">5.46096</td><td class="num">0.06702</td><td>a</td></tr>
          <tr class="data"><th scope="row">3</th><td>CC-3</td><td class="num">5.77815</td><td class="num">0.21842</td><td>b</td></tr>
          <tr class="data"><th scope="row">4</th><td>CC-4</td><td class="num">4.82093</td><td class="num">0.02704</td><td>c</td></tr>
          <tr class="data"><th scope="row">5</th><td>CC-5</td><td class="num">5.35757</td><td class="num">0.04609</td><td>d</td></tr>
          <tr class="data"><th scope="row">6</th><td>CC-9</td><td class="num">5.73247</td><td class="num">0.23643</td><td>d</td></tr>
          <tr><th scope="row">7</th><td></td><td></td><td></td><td></td></tr>
          <tr><th scope="row">8</th><td></td><td></td><td></td><td></td></tr>
          <tr><th scope="row">9</th><td></td><td></td><td></td><td></td></tr>
          <tr><th scope="row">10</th><td></td><td></td><td></td><td></td></tr>
          <tr><th scope="row">11</th><td></td><td></td><td></td><td></td></tr>
          <tr><th scope="row">12</th><td></td><td></td><td></td><td></td></tr>
          <tr><th scope="row">13</th><td></td><td></td><td></td><td></td></tr>
          <tr><th scope="row">14</th><td></td><td></td><td></td><td></td></tr>
          <tr><th scope="row">15</th><td></td><td></td><td></td><td></td></tr>
          <tr><th scope="row">16</th><td></td><td></td><td></td><td></td></tr>
          <tr><th scope="row">17</th><td></td><td></td><td></td><td></td></tr>
          <tr><th scope="row">18</th><td></td><td></td><td></td><td></td></tr>
        </tbody>
      </table>
    </div>
    <div class="sheetbar">
      <button class="nav" aria-label="上一张"><svg width="6" height="10"><path fill="#555" d="M6 0v10L0 5z"/></svg></button>
      <button class="nav" aria-label="下一张"><svg width="6" height="10"><path fill="#555" d="M0 0v10l6-5z"/></svg></button>
      <svg width="8" height="21"><path fill="#fff" d="M0 0h8v21z"/><path fill="none" stroke="#000" d="M1 0l6 21"/></svg>
      <button class="sheet">Sheet1</button>
      <svg width="8" height="21"><path fill="#fff" d="M0 0h8L1 21H0z"/><path fill="none" stroke="#000" d="M8 0L1 21"/></svg>
      <span class="rest"></span>
    </div>
  </section>

  <section class="child graph">
    <header class="child-title">
      <svg width="20" height="20" viewBox="0 0 20 20"><path fill="#222" d="M1 1h19v19H1z"/><path fill="#d8ecec" stroke="#355" d="M.500.500h17v17H.500z"/><path fill="#27a7ad" stroke="#1a6a70" d="M4 5l3-1h8l-2 3h2v3h-3l1 4H7l1-3H5l1-3z"/><path stroke="#123" d="M2 15l4-3M6 7.500h8M6 10.500h7"/></svg>
      <h2>Graph1 *</h2>
    </header>
    <div class="page">
      <button class="layer">1</button>
      <svg class="chart" width="234" height="583" viewBox="517 257 234 583" role="img" aria-label="柱状图">
        <rect class="bar" x="662.500" y="368.500" width="69" height="375"/>
        <path class="thin" d="M697.500 363v10M693 362.500h9M693 373.500h9"/>
        <path class="axis" d="M654 324v424M649 325h5M645 385h9M649 444h5M645 504h9M649 564h5M645 624h9M649 684h5M645 744h106M697 744v8M740 744v4M750 417v327"/>
        <g class="tick"><text x="640" y="391">6</text><text x="640" y="510">4</text><text x="640" y="630">2</text><text x="640" y="750">0</text></g>
        <text class="mid" x="697" y="773">CK</text>
        <text class="mid sans" x="697" y="359">a</text>
        <text class="mid sans" transform="translate(622 534) rotate(-90)">B</text>
      </svg>
    </div>
  </section>

  <section class="dialog" role="dialog" aria-labelledby="dlg-title">
    <header class="dialog-title">
      <svg width="18" height="14" viewBox="0 0 18 14"><path fill="#fff" stroke="#777" d="M.500.500h17v13H.500z"/><path fill="#2b7a55" d="M2 2h8v10H2z"/><path fill="#ccc" d="M11 2h5v10h-5z"/></svg>
      <h2 id="dlg-title">Y 坐标轴 - 图层 1</h2>
      <button class="dlgbtn">?</button>
      <button class="dlgbtn" aria-label="关闭"><svg width="14" height="14"><path d="M1 1l12 12M13 1L1 13" stroke="#111" fill="none"/></svg></button>
    </header>
    <div class="dialog-body">
      <div class="axes">
        <button class="axis-item">
          <svg width="40" height="40" viewBox="0 0 40 40"><path fill="#c4c2c4" stroke="#000" d="M4.500 9.500h31v21h-31z"/><path stroke="#000" stroke-width="3" stroke-dasharray="1 2" d="M6 7h28M6 32h28"/><path fill="none" stroke="#000" d="M9 28l3-1 4-8 4 7h3l4-11 4 9 4 3"/><path fill="#a01c30" stroke="#a01c30" d="M5 3.500h30M5 36.500h30M5 1v5l4-2.500zM35 1v5l-4-2.500zM5 34v5l4-2.500zM35 34v5l-4-2.500z"/></svg>
          <span>水平</span>
        </button>
        <button class="axis-item selected">
          <svg width="40" height="40" viewBox="0 0 40 40"><path fill="#fff" d="M0 0h40v40H0z"/><path fill="#c4c2c4" stroke="#000" d="M8.500 4.500h23v31h-23z"/><path stroke="#000" stroke-width="3" stroke-dasharray="1 2" d="M7 6v28M34 6v28"/><path fill="none" stroke="#000" d="M9 26l4-8 5 8h2l5-11 3 9 3 2"/><path fill="#a01c30" stroke="#a01c30" d="M3.500 5v30M37.500 5v30M1 5h5l-2.500 4zM1 35h5l-2.500-4zM35 5h5l-2.500 4zM35 35h5l-2.500-4z"/></svg>
          <span>垂直</span>
        </button>
      </div>
      <div class="tabs">
        <div class="tablist" role="tablist">
          <button role="tab" aria-selected="true" class="active">刻度</button><button role="tab">刻度线标签</button><button role="tab">标题</button><button role="tab">网格</button><button role="tab">轴线和刻度线</button><button role="tab">特殊刻度线</button><button role="tab">参照线</button><button role="tab">断点</button><button role="tab">轴须</button>
        </div>
        <form class="panel">
          <div class="field"><label for="from">起始</label><input id="from" class="w150" type="text" value="0"></div>
          <div class="field"><label for="to">结束</label><input id="to" class="w150 focus" type="text" value="7"></div>
          <div class="field"><label for="type">类型</label>
            <span class="select w280 tall">
              <svg width="36" height="32" viewBox="0 0 36 32"><path fill="#c4c2c4" stroke="#222" stroke-width="2" d="M6 8h28v18H6z"/><path stroke="#222" stroke-width="2" d="M11 22L31 11"/><path stroke="#222" stroke-width="4" stroke-dasharray="1 3" d="M3 8v18"/><path stroke="#222" stroke-width="5" stroke-dasharray="1 4" d="M9 29h24"/></svg>
              <select id="type"><option>线性</option></select>
            </span></div>
          <div class="field"><label for="rescale">调整刻度</label><span class="select w237"><select id="rescale"><option>常规</option></select></span></div>
          <div class="field"><label for="margin">重新调整页边距(%)</label><input id="margin" class="w150" type="text" value="8"></div>
          <div class="field check"><label for="reverse">翻转</label><input id="reverse" type="checkbox"></div>
          <div class="group"><button type="button" class="fold" aria-label="折叠主刻度"></button><span>主刻度</span><hr></div>
          <div class="field sub"><label for="major-type">类型</label><span class="select w199"><select id="major-type"><option>按增量</option></select></span></div>
          <div class="field sub"><label for="major-value">值</label><input id="major-value" class="w150" type="text" value="2"></div>
          <div class="field sub"><label for="anchor">锚点刻度</label><input id="anchor" class="w190" type="text" value=""></div>
          <p class="note">主刻度间隔是根据锚点刻度值计算的。</p>
          <div class="group"><button type="button" class="fold" aria-label="折叠次刻度"></button><span>次刻度</span><hr></div>
          <div class="field sub"><label for="minor-type">类型</label><span class="select w139"><select id="minor-type"><option>按数量</option></select></span></div>
          <div class="field sub"><label for="minor-count">计数</label><input id="minor-count" class="w150" type="text" value="1"></div>
        </form>
      </div>
    </div>
    <p class="hint">选中多个轴同时进行修改</p>
    <footer class="actions">
      <button class="btn apply-to">应用于...</button>
      <button class="btn ok">确定</button>
      <button class="btn">取消</button>
      <button class="btn" disabled>应用</button>
    </footer>
  </section>

  <svg class="cursor" width="14" height="21" viewBox="0 0 14 21"><path fill="#fff" stroke="#333" d="M1 1v16l4-4 3 7 3-1-3-7h5z"/></svg>
</main>

<div class="dock dock-bottom">
  <div class="dock-row">
    <div class="toolbar lead" role="toolbar" aria-label="2D 图形">
      <button class="drop" aria-label="更多"></button>
      <button class="tb" aria-label="散点图"><svg><use href="#dots"/></svg></button><button class="drop" aria-label="更多"></button>
      <button class="tb" aria-label="点线图"><svg><use href="#line-dots"/></svg></button><button class="drop" aria-label="更多"></button>
      <button class="tb" aria-label="柱状图"><svg><use href="#red-bars"/></svg></button><button class="drop" aria-label="更多"></button>
      <button class="tb" aria-label="多面板"><svg><use href="#wave-box"/></svg></button><button class="drop" aria-label="更多"></button>
      <button class="tb" aria-label="箱线图"><svg><use href="#box"/></svg></button><button class="drop" aria-label="更多"></button>
      <button class="tb" aria-label="面积图"><svg><use href="#areas"/></svg></button><button class="drop" aria-label="更多"></button>
      <button class="tb" aria-label="极坐标"><svg><use href="#polar"/></svg></button><button class="drop" aria-label="更多"></button>
      <button class="tb" aria-label="股票图"><svg><use href="#candles"/></svg></button><button class="drop" aria-label="更多"></button>
      <button class="tb off" aria-label="模板库"><svg><use href="#cards"/></svg></button>
      <button class="cap" aria-label="工具栏选项"></button>
    </div>
    <div class="toolbar" role="toolbar" aria-label="3D 图形">
      <span class="grip"></span>
      <button class="tb off" aria-label="3D 柱"><svg><use href="#bars3d"/></svg></button><button class="drop" aria-label="更多"></button>
      <span class="sep"></span>
      <button class="tb off" aria-label="3D 曲面"><svg><use href="#slab"/></svg></button><button class="drop" aria-label="更多"></button>
      <button class="tb off" aria-label="3D 散点"><svg><use href="#cube-dots"/></svg></button><button class="drop" aria-label="更多"></button>
      <button class="tb off" aria-label="等高线"><svg><use href="#dotgrid"/></svg></button><button class="drop" aria-label="更多"></button>
      <button class="tb off" aria-label="剖面"><svg><use href="#wave-row"/></svg></button><button class="drop" aria-label="更多"></button>
      <button class="tb off" aria-label="图像"><svg><use href="#square"/></svg></button>
      <button class="cap" aria-label="工具栏选项"></button>
    </div>
    <div class="toolbar" role="toolbar" aria-label="屏蔽数据">
      <span class="grip"></span>
      <button class="tb off" aria-label="屏蔽点"><svg><use href="#face"/></svg></button>
      <button class="tb off" aria-label="取消屏蔽点"><svg><use href="#face-x"/></svg></button>
      <span class="sep"></span>
      <button class="tb off" aria-label="隐藏屏蔽"><svg><use href="#mask-face"/></svg></button>
      <button class="tb off" aria-label="范围"><svg><use href="#pick"/></svg></button>
      <button class="tb" aria-label="红色范围"><svg><use href="#pick-red"/></svg></button>
      <span class="sep"></span>
      <button class="tb" aria-label="全部范围"><svg><use href="#pick"/></svg></button>
      <button class="cap" aria-label="工具栏选项"></button>
    </div>
    <div class="toolbar" role="toolbar" aria-label="3D 旋转">
      <span class="grip"></span>
      <button class="tb off" aria-label="逆时针"><svg><use href="#rot-l"/></svg></button>
      <button class="tb off" aria-label="顺时针"><svg><use href="#rot-r"/></svg></button>
      <button class="tb off" aria-label="左倾"><svg><use href="#tilt-l"/></svg></button>
      <button class="tb off" aria-label="右倾"><svg><use href="#tilt-r"/></svg></button>
      <button class="tb off" aria-label="下倾"><svg><use href="#trap-up"/></svg></button>
      <button class="tb off" aria-label="上倾"><svg><use href="#trap-dn"/></svg></button>
      <button class="tb off" aria-label="透视"><svg><use href="#tray"/></svg></button>
      <button class="tb off" aria-label="减小透视"><svg><use href="#cubes"/></svg></button>
      <button class="tb off" aria-label="适应框架"><svg><use href="#expand"/></svg></button>
      <button class="tb off" aria-label="重置旋转"><svg><use href="#axis-cube"/></svg></button>
      <button class="tb off" aria-label="重置"><svg><use href="#box-cube"/></svg></button>
      <span class="combo flat"><select aria-label="角度" disabled><option>10</option></select></span>
      <button class="cap" aria-label="工具栏选项"></button>
    </div>
  </div>
</div>

<div class="statusbar">
  <span class="cell">--</span><span class="cell gap"></span><span class="cell">AU : 开</span><span class="cell">Light Grids</span><span class="cell">1:[Book1]Sheet1!Col(B)[1:6]</span><span class="cell last">1:[Graph1]</span>
</div>

<footer class="taskbar">
  <button class="task rec" aria-label="录屏"><svg width="30" height="30" viewBox="0 0 30 30"><circle cx="14" cy="15" r="13" fill="#161416" stroke="#fff" stroke-width="2"/><circle cx="14" cy="16" r="6" fill="none" stroke="#fff"/><circle cx="22" cy="22" r="8" fill="#e00008"/></svg></button>
  <button class="task on" aria-label="Origin"><svg width="30" height="30" viewBox="0 0 30 30"><path fill="#e4ecf2" stroke="#9ab" d="M7 1h22v21H7z"/><path stroke="#b8c6d2" d="M12 1v21M17 1v21M22 1v21M7 7h22M7 13h22"/><circle cx="13" cy="17" r="12" fill="#e4988e"/><path fill="none" stroke="#7a3a38" d="M6 22l3-8 3 5 3-10 4 6"/><path stroke="#f6d8d0" d="M2 17h22M9 7v20M17 7v20"/></svg></button>
  <button class="task" aria-label="Excel"><svg width="30" height="30" viewBox="0 0 30 30"><path fill="#21a366" d="M7 1h22v28H7z"/><path fill="#33c481" d="M18 1h11v9H18z"/><path fill="#107c41" d="M7 10h11v10H7zM18 15h11v7H18z"/><path fill="#185c37" d="M7 20h22v9H7z"/><path fill="#107c41" d="M0 7h16v16H0z"/><path stroke="#fff" stroke-width="2" d="M5 11l6 8M11 11l-6 8"/></svg></button>
  <button class="task stacked" aria-label="照片"><svg width="30" height="30" viewBox="0 0 30 30"><path fill="#35a6dc" d="M1 1h28v28H1z"/><path fill="#5f7fd0" d="M13 19l8-7 8 8v9H13z"/><path fill="#1a3f80" d="M1 18l9-7 18 18H1z"/><circle cx="20" cy="8" r="3" fill="#e8fbe8"/></svg></button>
  <span class="fill"></span>
  <button class="tray" aria-label="显示隐藏的图标"><svg width="16" height="10"><path d="M1 9l7-8 7 8" fill="none" stroke="#fff" stroke-width="1"/></svg></button>
  <button class="tray ime">英</button>
  <div class="clock"><span>20:25</span><span>2022/5/</span></div>
</footer>
</body>
</html>
```
FILE: styles.css
```css
* { box-sizing: border-box; }

:root {
  --ui: "Open Sans", "Noto Sans CJK SC", sans-serif;
  --song: "Liberation Serif", "Noto Sans CJK SC", serif;
}

body {
  margin: 0;
  height: 100vh;
  display: flex;
  flex-direction: column;
  overflow: hidden;
  background: #f0eff6;
  color: #000;
  font: 14px/20px var(--ui);
}

button, input, select { font: inherit; color: inherit; margin: 0; }
button { padding: 0; border: 0; background: none; }
h1, h2, p { margin: 0; font-weight: normal; }
.sprite { display: none; }

/* title and menu */
.titlebar {
  height: 29px;
  flex: none;
  display: flex;
  justify-content: space-between;
  align-items: center;
  padding-left: 5px;
  background: #fefefe;
  overflow: hidden;
}
.title { font-size: 15px; color: #8c8a8c; white-space: nowrap; }
.window-buttons { display: flex; gap: 45px; margin-right: -10px; }
.winbtn { display: flex; }

.menubar {
  height: 28px;
  flex: none;
  display: flex;
  align-items: center;
  margin-left: -32px;
  background: #f0f0fa;
  white-space: nowrap;
}
.menubar a { color: #111; text-decoration: none; padding: 0 8px 0 7px; }

/* toolbars */
.dock { flex: none; background: #f1f2fc; overflow: hidden; }
.dock-top { border-bottom: 1px solid #706e7a; padding-bottom: 1px; }
.dock-bottom { border-top: 1px solid #fff; border-bottom: 1px solid #c8c8d8; padding: 1px 0; }
.dock-row { display: flex; height: 29px; }
.toolbar {
  flex: none;
  display: flex;
  align-items: center;
  height: 28px;
  border-bottom: 1px solid #8d8ca4;
  border-radius: 0 0 4px 4px;
  background: linear-gradient(#f9f9fe, #e6e6f1 50%, #b6b5cb);
}
.toolbar.first { padding-left: 2px; }
.toolbar.clipped { margin-left: -12px; }
.toolbar.lead { margin-left: -4px; }
.tb {
  width: 22px;
  height: 24px;
  flex: none;
  display: flex;
  align-items: center;
  justify-content: center;
}
.tb svg {
  width: 16px;
  height: 16px;
  fill: none;
  stroke: currentColor;
  shape-rendering: crispEdges;
}
.off { color: #76758a; }
.sep { width: 8px; height: 17px; flex: none; background: linear-gradient(#bdbdcc, #bdbdcc) 4px 0 / 1px 100% no-repeat; }
.dock-bottom .sep { width: 9px; }
.grip { width: 9px; height: 18px; flex: none; background: repeating-linear-gradient(#9a9ab0 0 2px, transparent 2px 4px) 3px 0 / 2px 100% no-repeat; }
.drop { width: 9px; flex: none; display: flex; justify-content: center; }
.drop.wide { width: 13px; }
.drop::before { content: ""; border: 4px solid transparent; border-top-color: currentColor; border-bottom: 0; }
.cap {
  width: 13px;
  height: 28px;
  flex: none;
  display: flex;
  flex-direction: column;
  align-items: center;
  justify-content: flex-end;
  gap: 2px;
  padding-bottom: 3px;
  border-radius: 4px 0 0;
  background: linear-gradient(#b3b2c6, #d0d0e0 50%, #f1f2fc);
}
.cap::before { content: ""; width: 7px; height: 2px; background: #000; }
.cap::after { content: ""; border: 4px solid transparent; border-top-color: #000; border-bottom: 0; }

.combo {
  width: 72px;
  height: 26px;
  flex: none;
  margin: 0 3px;
  display: grid;
  grid-template-columns: 1fr 12px;
  align-items: center;
  background: #fefefe;
}
.combo select {
  grid-area: 1 / 1 / 2 / 3;
  width: 100%;
  height: 26px;
  padding: 0 14px 0 3px;
  appearance: none;
  border: 0;
  border-radius: 0;
  background: none;
  opacity: 1;
}
.combo::after {
  content: "";
  grid-area: 1 / 2;
  height: 24px;
  background: linear-gradient(#e6e6f0, #c4c4d6);
}
.combo::before {
  content: "";
  grid-area: 1 / 2;
  z-index: 1;
  justify-self: center;
  border: 4px solid transparent;
  border-top-color: #222;
  border-bottom: 0;
}
.combo.font { width: 158px; grid-template-columns: 28px 1fr 12px; }
.combo.font select { grid-area: 1 / 2 / 2 / 4; padding-left: 2px; }
.combo.font::before, .combo.font::after { grid-area: 1 / 3; }
.tt { grid-area: 1 / 1; padding-left: 6px; font: bold 18px/22px "Liberation Serif", serif; white-space: nowrap; }
.tt i { font: bold 13px/20px "Liberation Serif", serif; color: #777; }
.combo.flat { background: #efeef0; border: 1px solid #a3a2aa; color: #808088; font-size: 15px; height: 25px; }
.combo.flat select { height: 23px; color: #808088; }
.combo.flat::after { background: none; }
.combo.flat::before { border-top-color: #808088; }
.combo.line { width: 70px; }
.combo.line select { padding-left: 34px; font-size: 13px; background: linear-gradient(#222, #222) 4px 11px / 28px 3px no-repeat; }
.swatch { width: 36px; height: 16px; flex: none; margin-left: 3px; border: 1px solid #a9a8bb; background: #e4e4ef; }

.glyph { font: 16px/20px "Liberation Serif", serif; }
.glyph.off { font-weight: bold; font-size: 14px; }
.glyph sup, .glyph sub { font-size: 9px; line-height: 9px; }
.glyph sup { align-self: flex-start; }
.glyph sub { align-self: flex-end; }
.both { display: flex; flex-direction: column; font-size: 9px; line-height: 8px; }
.bold { font-weight: bold; font-size: 18px; }
.italic { font-weight: bold; font-style: italic; font-size: 18px; }
.under { font-weight: bold; text-decoration: underline; font-size: 17px; }
.glyph.greek { font-size: 16px; }
.big { font-size: 20px; font-weight: bold; }
.fontcolor { height: 18px; font-weight: bold; font-size: 17px; line-height: 14px; color: #10103c; background: linear-gradient(#10103c, #10103c) 3px 100% / 16px 4px no-repeat; }

/* workspace */
.workspace { position: relative; flex: 1; min-height: 0; overflow: hidden; background: #a9a8a9; }
.child {
  position: absolute;
  display: flex;
  flex-direction: column;
  border: 1px solid #4b4f5e;
  border-radius: 8px 8px 0 0;
  background: linear-gradient(#c0cbdc, #d9e1ef 40px);
}
.child-title { display: flex; align-items: center; gap: 4px; color: #8f96a3; }
.child-title h2 { font-size: 16px; }
.book { left: 85px; top: 112px; width: 500px; height: 528px; padding: 0 9px 9px; }
.book .child-title { height: 38px; padding: 6px 0 0 1px; }

.grid { flex: 1; min-height: 0; overflow: hidden; border: 1px solid #5b606e; border-bottom: 0; background: #f2f2f2; font-family: var(--song); }
.grid table { width: 444px; table-layout: fixed; border-collapse: separate; border-spacing: 0; font-size: 16px; line-height: 17px; }
.c-head { width: 108px; }
.c-data { width: 84px; }
.grid th, .grid td { height: 20px; padding: 0 4px 2px; overflow: hidden; white-space: nowrap; }
.grid th { font-weight: normal; text-align: right; background: #e0dfe6; border-right: 1px solid #000; border-bottom: 1px solid #000; }
.grid thead th { height: 30px; text-align: center; padding-bottom: 0; }
.grid .current { background: #b5b6cf; font-weight: bold; }
.grid td { padding: 0 3px 2px; border-right: 1px solid #bcbcbc; border-bottom: 1px solid #bcbcbc; background: #f2f2f2; }
.grid .meta td { background: #fcfccb; }
.grid .fx td { background: #f7f8b0; }
.grid .data td { background: #fefefe; }
.grid td.num { text-align: right; padding-right: 4px; }
.grid td.cell-current { border: 2px solid #222; }

.sheetbar { display: flex; height: 22px; flex: none; background: #c9c9c9; border-left: 1px solid #5b606e; border-bottom: 1px solid #fff; }
.nav { width: 21px; display: flex; align-items: center; justify-content: center; background: #f0f0f0; border: 1px solid #777; border-top: 0; }
.sheet { padding: 0 4px 0 3px; background: #fff; font: 18px/20px "Liberation Mono", monospace; }
.rest { flex: 1; border-top: 1px solid #000; }

.graph { left: 506px; top: 100px; width: 300px; height: 635px; border: 2px solid #5e0f5e; border-radius: 6px 6px 0 0; padding: 0 8px 9px 8px; background: linear-gradient(#c0cbdc, #d9dfef 40px); box-shadow: inset 2px 2px 2px #f0b4f0, 0 2px 1px #c89cc4; }
.graph .child-title { height: 37px; padding: 8px 0 4px 1px; }
.page { flex: 1; display: grid; align-content: start; justify-content: start; border: 1px solid #555c6c; border-bottom-color: #fff; background: #fefefe; }
.layer { grid-area: 1 / 1; width: 26px; height: 26px; z-index: 1; background: #c2c0c2; font: bold 20px/26px "Liberation Sans", sans-serif; }
.chart { grid-area: 1 / 1 / 3 / 3; display: block; font-family: "Liberation Serif", serif; font-size: 17px; }
.bar { fill: #f7c49b; stroke: #000; }
.thin { stroke: #000; }
.axis { stroke: #000; stroke-width: 2; fill: none; }
.tick { text-anchor: end; }
.mid { text-anchor: middle; }
.sans { font: 18px "Liberation Sans", sans-serif; }

/* dialog */
.dialog {
  position: absolute;
  left: 750px;
  top: 13px;
  width: 875px;
  height: 804px;
  display: flex;
  flex-direction: column;
  border: 1px solid #505054;
  background: #f0eff2;
  box-shadow: 2px 4px 16px rgba(0, 0, 0, .45);
  font: 15px/20px var(--song);
}
.dialog-title { height: 37px; flex: none; display: flex; align-items: center; gap: 6px; padding: 0 22px 2px 10px; background: #fff; font: 15px/20px var(--ui); }
.dialog-title h2 { flex: 1; font-size: 15px; }
.dlgbtn { width: 54px; height: 30px; display: flex; align-items: center; justify-content: flex-end; font-size: 16px; }
.dialog-body { flex: 1; min-height: 0; display: grid; grid-template-columns: 122px 1fr; gap: 6px; padding: 4px 4px 0 5px; }
.axes { margin-top: 31px; padding-top: 1px; background: #807e80; display: flex; flex-direction: column; border-top: 1px solid #999; }
.axis-item { height: 75px; display: flex; flex-direction: column; align-items: center; background: #fefefe; gap: 7px; }
.axis-item.selected { background: #0b7bd3; color: #fff; border: 1px dotted #e8c8a0; }
.tabs { min-width: 0; display: flex; flex-direction: column; }
.tablist { display: flex; align-items: flex-end; height: 29px; padding-left: 1px; }
.tablist button { height: 27px; padding: 0 7px 3px 5px; border: 1px solid #dad8dc; border-width: 1px 1px 0 0; }
.tablist .active { height: 30px; margin-bottom: -1px; padding: 0 8px 1px 7px; border-left-width: 1px; background: #fefefe; font-weight: bold; z-index: 1; }
.panel { flex: 1; display: flex; flex-direction: column; gap: 8px; padding: 20px 18px 0 15px; border: 1px solid #96959a; background: #fefefe; }
.field { display: grid; grid-template-columns: 138px auto; justify-content: start; align-items: center; }
.field.sub label { padding-left: 28px; }
.field label { white-space: nowrap; line-height: 16px; padding-bottom: 2px; }
.field.check { height: 19px; }
.panel input[type="text"] { height: 26px; padding: 0 3px; border: 1px solid #7a7a7c; border-radius: 0; background: #fff; outline: 0; font-size: 17px; }
.panel input.focus { border-color: #111; }
.panel input[type="checkbox"] { width: 16px; height: 17px; appearance: none; border: 1px solid #333; background: #fff; }
.select { height: 23px; display: grid; grid-template-columns: 1fr 20px; align-items: center; background: #e2e0e2; border: 1px solid #acabad; }
.select select { grid-area: 1 / 1 / 2 / 3; width: 100%; height: 21px; padding: 0 20px 0 3px; appearance: none; border: 0; background: none; }
.select::after { content: ""; grid-area: 1 / 2; width: 7px; height: 7px; margin: 0 0 4px 6px; border: solid #555; border-width: 0 1px 1px 0; transform: rotate(45deg); }
.select.tall { height: 33px; background: #fff; border-color: #7a7a7c; }
.select.tall svg { grid-area: 1 / 1; margin-left: 3px; align-self: end; }
.select.tall select { height: 31px; padding: 0 20px 10px 42px; font-size: 16px; }
.w150 { width: 150px; }
.w190 { width: 190px; }
.w139 { width: 139px; }
.w199 { width: 199px; }
.w237 { width: 237px; }
.w280 { width: 280px; }
.group { display: flex; align-items: center; height: 18px; }
.group span { margin: 0 2px 0 6px; }
.group hr { flex: 1; margin: 0; border: 0; border-top: 1px solid #9a999d; }
.fold { width: 13px; height: 13px; border: 1px solid #222; background: linear-gradient(#222, #222) center / 7px 1px no-repeat; }
.note { height: 25px; padding-left: 29px; color: #140a66; font-size: 18px; line-height: 20px; font-weight: bold; white-space: nowrap; }
.hint { padding: 3px 8px 5px; }
.actions { display: flex; justify-content: flex-end; gap: 6px; padding: 0 5px 5px; }
.btn { width: 98px; height: 25px; border: 1px solid #adabae; background: #e2e0e2; }
.btn.ok { border: 2px solid #2a72a0; box-shadow: inset 0 0 0 1px #bfe6fa; }
.btn.apply-to { width: 108px; margin-right: 4px; }
.btn:disabled { border-color: #c8c6c8; background: #cac8ca; color: #888; }
.cursor { position: absolute; left: 1078px; top: 137px; }

/* status bar and taskbar */
.statusbar { height: 24px; flex: none; display: flex; justify-content: flex-end; align-items: center; margin-right: -43px; padding-top: 2px; background: #f0eef1; font-size: 13px; white-space: nowrap; }
.cell { height: 20px; padding: 0 3px 0 4px; border-left: 1px solid #d2d0d4; }
.cell.gap { width: 10px; }
.taskbar { height: 50px; flex: none; display: flex; background: #4c4a4c; color: #fff; overflow: hidden; }
.task { width: 51px; margin-right: 11px; display: flex; align-items: center; justify-content: center; border-bottom: 3px solid #b4b2b4; }
.task.rec { margin: 0 6px 0 -27px; }
.task.on { width: 61px; margin-right: 6px; background: #727072; }
.task.stacked { border: 0; background: linear-gradient(90deg, #b4b2b4 80%, #807e80 80%) 0 100% / 100% 3px no-repeat; }
.fill { flex: 1; }
.tray { display: flex; align-items: center; margin-right: 12px; }
.ime { font-size: 18px; margin-right: 14px; }
.clock { display: flex; flex-direction: column; justify-content: center; align-items: flex-end; font-size: 15px; line-height: 24px; }
```
